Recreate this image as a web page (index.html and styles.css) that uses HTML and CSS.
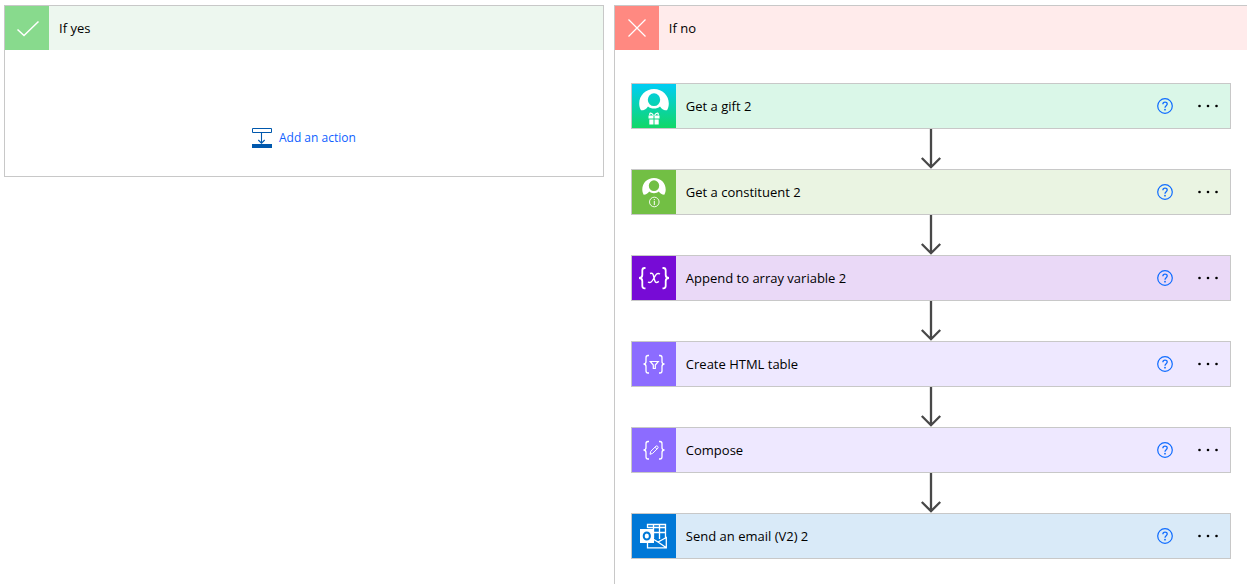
FILE: index.html
```html
<!DOCTYPE html>
<html lang="en">
<head>
  <meta charset="utf-8">
  <title>Condition</title>
  <link rel="stylesheet" href="styles.css">
</head>
<body>
  <!-- Shared shapes -->
  <svg class="defs" width="0" height="0" aria-hidden="true">
    <symbol id="arrow" viewBox="0 0 22 40">
      <path d="M11 0V38M1.8 29L11 38.2L20.2 29" fill="none" stroke="#484848" stroke-width="2.3"/>
    </symbol>
    <symbol id="help" viewBox="0 0 16 16">
      <circle cx="8" cy="8" r="7.3" fill="none" stroke="#0f6cff" stroke-width="1.2"/>
      <path d="M5.9 6.2C5.9 3.4 10.2 3.5 10.2 6C10.2 7.7 8 7.7 8 9.7" fill="none" stroke="#0f6cff" stroke-width="1.3"/>
      <circle cx="8" cy="11.7" r=".9" fill="#0f6cff"/>
    </symbol>
    <symbol id="dots" viewBox="0 0 20 4">
      <circle cx="1.5" cy="2" r="1.3"/>
      <circle cx="10" cy="2" r="1.3"/>
      <circle cx="18.5" cy="2" r="1.3"/>
    </symbol>
    <symbol id="braces" viewBox="0 0 44 44">
      <path d="M17 13.5H16C14.6 13.5 14 14.3 14 15.7V19.5C14 21.2 13.2 22 11.5 22C13.2 22 14 22.8 14 24.5V28.8C14 30.2 14.6 31 16 31H17M27 13.5H28C29.4 13.5 30 14.3 30 15.7V19.5C30 21.2 30.8 22 32.5 22C30.8 22 30 22.8 30 24.5V28.8C30 30.2 29.4 31 28 31H27" fill="none" stroke="#fff" stroke-width="1.3"/>
    </symbol>
  </svg>

  <main class="branches">
    <section class="branch">
      <header class="branch-header yes">
        <svg class="icon" viewBox="0 0 44 44" aria-hidden="true">
          <path d="M12.5 23.5L19 29.5L33.5 15.5" fill="none" stroke="#fff" stroke-width="1.5"/>
        </svg>
        <h2>If yes</h2>
      </header>
      <div class="empty">
        <button class="add-action" type="button">
          <svg width="20" height="20" viewBox="0 0 20 20" aria-hidden="true">
            <path d="M.5 .5H19.5V4.5H.5Z" fill="none" stroke="#0058ad"/>
            <path d="M0 16H20V20H0Z" fill="#0058ad"/>
            <path d="M9.5 5V15M6.3 12L9.5 15.2L12.7 12" fill="none" stroke="#0058ad" stroke-width="1.1"/>
          </svg>
          Add an action
        </button>
      </div>
    </section>

    <section class="branch open">
      <header class="branch-header no">
        <svg class="icon" viewBox="0 0 44 44" aria-hidden="true">
          <path d="M13.5 13.5L30.5 30.5M30.5 13.5L13.5 30.5" fill="none" stroke="#fff" stroke-width="1.2"/>
        </svg>
        <h2>If no</h2>
      </header>

      <div class="steps">
        <article class="card gift">
          <svg class="icon" viewBox="0 0 44 44" aria-hidden="true">
            <defs>
              <linearGradient id="gift-bg" x1="0" y1="0" x2="0" y2="1">
                <stop offset="0" stop-color="#00cdf5"/>
                <stop offset="1" stop-color="#12d867"/>
              </linearGradient>
            </defs>
            <path d="M0 0H44V44H0Z" fill="url(#gift-bg)"/>
            <path fill="#fff" fill-rule="evenodd" d="M22 5C30.5 5 36.8 11.5 36.8 19.5C36.8 22 36.3 24.3 35 26.3C32 26.3 29.6 25 28 22.4C26.4 23.8 24.4 24.5 22 24.5C19.6 24.5 17.6 23.8 16 22.4C14.4 25 12 26.3 9 26.3C7.7 24.3 7.2 22 7.2 19.5C7.2 11.5 13.5 5 22 5ZM22 9.3A6.2 6.4 0 0 0 22 22.1A6.2 6.4 0 0 0 22 9.3Z"/>
            <path d="M21.5 31.5C19.5 28 16.8 29 18 31.2M22.5 31.5C24.5 28 27.2 29 26 31.2" fill="none" stroke="#fff" stroke-width="1.2"/>
            <path d="M16.5 31.5H21.5V34.5H16.5ZM22.5 31.5H27.5V34.5H22.5ZM17.3 35.5H21.5V40.5H17.3ZM22.5 35.5H26.7V40.5H22.5Z" fill="#fff"/>
          </svg>
          <h3>Get a gift 2</h3>
          <button class="help" type="button" aria-label="Help"><svg width="16" height="16"><use href="#help"/></svg></button>
          <button class="menu" type="button" aria-label="Menu"><svg width="20" height="4"><use href="#dots"/></svg></button>
        </article>
        <svg class="arrow" width="22" height="40" aria-hidden="true"><use href="#arrow"/></svg>

        <article class="card constituent">
          <svg class="icon" viewBox="0 0 44 44" aria-hidden="true">
            <path fill="#fff" fill-rule="evenodd" d="M22 8C28.8 8 33.7 13.1 33.7 19.5C33.7 21.6 33.2 23.3 32.3 24.7C29.9 24.7 28 23.7 26.8 21.6C25.5 22.7 23.9 23.2 22 23.2C20.1 23.2 18.5 22.7 17.2 21.6C16 23.7 14.1 24.7 11.7 24.7C10.8 23.3 10.3 21.6 10.3 19.5C10.3 13.1 15.2 8 22 8ZM22 10.3A5.2 5.4 0 0 0 22 21.1A5.2 5.4 0 0 0 22 10.3Z"/>
            <circle cx="22.3" cy="32" r="4.8" fill="none" stroke="#fff" stroke-width=".9"/>
            <path d="M22.3 29V30.2M22.3 31V35" stroke="#fff"/>
          </svg>
          <h3>Get a constituent 2</h3>
          <button class="help" type="button" aria-label="Help"><svg width="16" height="16"><use href="#help"/></svg></button>
          <button class="menu" type="button" aria-label="Menu"><svg width="20" height="4"><use href="#dots"/></svg></button>
        </article>
        <svg class="arrow" width="22" height="40" aria-hidden="true"><use href="#arrow"/></svg>

        <article class="card variable">
          <svg class="icon" viewBox="0 0 44 44" aria-hidden="true">
            <path d="M13.5 12H12.5C11 12 10.3 12.9 10.3 14.5V19C10.3 21.2 9.5 22 7 22C9.5 22 10.3 22.8 10.3 25V29.8C10.3 31.4 11 32.3 12.5 32.3H13.5M30.5 12H31.5C33 12 33.7 12.9 33.7 14.5V19C33.7 21.2 34.5 22 37 22C34.5 22 33.7 22.8 33.7 25V29.8C33.7 31.4 33 32.3 31.5 32.3H30.5" fill="none" stroke="#fff" stroke-width="1.8"/>
            <path d="M18 17.5C20.7 16.3 21.3 18.3 22 21.8C22.8 25.5 23.4 28 26.8 25.4M28 18C24.3 16 23.3 20 21.7 22.5C20 25.3 18.8 27.7 16 26" fill="none" stroke="#fff" stroke-width="1.4"/>
          </svg>
          <h3>Append to array variable 2</h3>
          <button class="help" type="button" aria-label="Help"><svg width="16" height="16"><use href="#help"/></svg></button>
          <button class="menu" type="button" aria-label="Menu"><svg width="20" height="4"><use href="#dots"/></svg></button>
        </article>
        <svg class="arrow" width="22" height="40" aria-hidden="true"><use href="#arrow"/></svg>

        <article class="card data">
          <svg class="icon" viewBox="0 0 44 44" aria-hidden="true">
            <use href="#braces"/>
            <path d="M18.3 19.5H26.3L23.3 23V26.5H21.3V23Z" fill="none" stroke="#fff" stroke-width="1.2"/>
          </svg>
          <h3>Create HTML table</h3>
          <button class="help" type="button" aria-label="Help"><svg width="16" height="16"><use href="#help"/></svg></button>
          <button class="menu" type="button" aria-label="Menu"><svg width="20" height="4"><use href="#dots"/></svg></button>
        </article>
        <svg class="arrow" width="22" height="40" aria-hidden="true"><use href="#arrow"/></svg>

        <article class="card data">
          <svg class="icon" viewBox="0 0 44 44" aria-hidden="true">
            <use href="#braces"/>
            <path d="M18 26.3L18.7 23.4L24 18.1C25 17.2 26.9 19 25.9 20.1L20.6 25.4ZM23 19.2L24.9 21.1" fill="none" stroke="#fff"/>
          </svg>
          <h3>Compose</h3>
          <button class="help" type="button" aria-label="Help"><svg width="16" height="16"><use href="#help"/></svg></button>
          <button class="menu" type="button" aria-label="Menu"><svg width="20" height="4"><use href="#dots"/></svg></button>
        </article>
        <svg class="arrow" width="22" height="40" aria-hidden="true"><use href="#arrow"/></svg>

        <article class="card outlook">
          <svg class="icon" viewBox="0 0 44 44" aria-hidden="true">
            <path d="M15.5 14V10.5H33.5V24M15.5 13.5H33.5M15.5 18.5H33.5M21.5 11V24M27.5 11V25" fill="none" stroke="#fff" stroke-width="1.3"/>
            <path d="M15.5 28V33.8H34.3V23.5L26 28L21 25M26 28L34 33.5" fill="none" stroke="#fff" stroke-width="1.3"/>
            <path d="M8 15H22V29H8Z" fill="#fff"/>
            <ellipse cx="14.8" cy="22" rx="3.1" ry="3.5" fill="none" stroke="#0078d7" stroke-width="2"/>
          </svg>
          <h3>Send an email (V2) 2</h3>
          <button class="help" type="button" aria-label="Help"><svg width="16" height="16"><use href="#help"/></svg></button>
          <button class="menu" type="button" aria-label="Menu"><svg width="20" height="4"><use href="#dots"/></svg></button>
        </article>
      </div>
    </section>
  </main>
</body>
</html>
```

FILE: styles.css
```css
* {
  box-sizing: border-box;
}

body {
  margin: 0;
  background: #fff;
  color: #000;
  font-family: "Open Sans", "Noto Sans", sans-serif;
  font-size: 13px;
  line-height: 20px;
}

h2, h3 {
  margin: 0;
  font-size: 13px;
  font-weight: normal;
}

button {
  padding: 0;
  border: none;
  background: none;
  font: inherit;
  cursor: pointer;
}

svg {
  display: block;
}

.defs {
  position: absolute;
}

.branches {
  display: grid;
  grid-template-columns: minmax(0, 18fr) minmax(0, 19fr);
  align-items: start;
  gap: 10px;
  padding: 5px 0 0 4px;
}

.branch {
  border: 1px solid #c8c8c8;
}

.branch.open {
  min-height: calc(100vh - 5px);
  border-right: none;
  border-bottom: none;
}

.icon {
  flex: none;
  width: 44px;
  height: 44px;
}

.branch-header {
  display: flex;
  align-items: center;
  gap: 10px;
}

.yes {
  background: #edf7ef;
}

.yes .icon {
  background: #88da8d;
}

.no {
  background: #ffebeb;
}

.no .icon {
  background: #ff8981;
}

.empty {
  display: flex;
  justify-content: center;
  padding: 78px 16px 28px;
}

.add-action {
  display: flex;
  align-items: center;
  gap: 7px;
  color: #0f5fff;
  font-size: 12px;
}

.steps {
  padding: 33px 16px 24px;
}

.card {
  display: flex;
  align-items: center;
  border: 1px solid #c8c8c8;
}

.card h3 {
  flex: 1;
  padding-left: 10px;
}

.help {
  margin-right: 25px;
}

.menu {
  padding: 8px 0;
  margin-right: 12px;
}

.arrow {
  margin: 0 auto;
}

.gift {
  background: #daf7e8;
}

.constituent {
  background: #eaf4e2;
}

.constituent .icon {
  background: #72bf44;
}

.variable {
  background: #ead9f7;
}

.variable .icon {
  background: #770bd6;
}

.data {
  background: #eee8ff;
}

.data .icon {
  background: #8c6cff;
}

.outlook {
  background: #d9eaf8;
}

.outlook .icon {
  background: #0078d7;
}
```
